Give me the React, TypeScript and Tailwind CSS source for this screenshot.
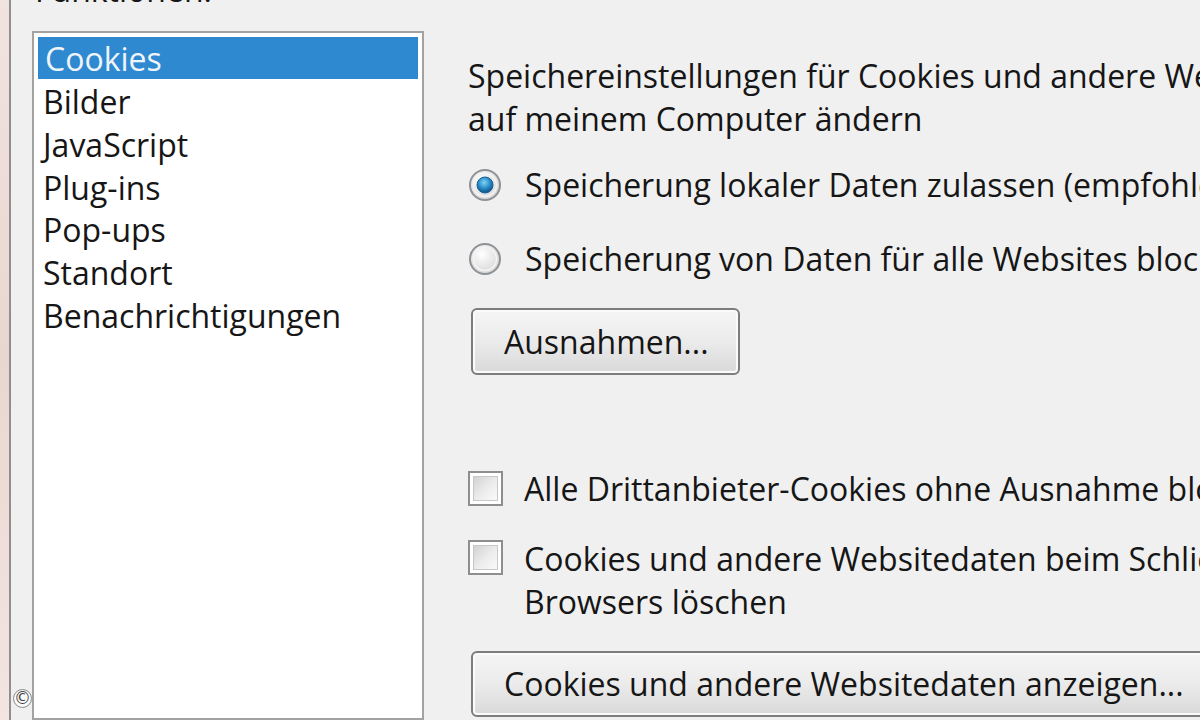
import React from "react";

function Radio({ checked }: { checked?: boolean }) {
  return (
    <svg width="34" height="34" viewBox="0 0 34 34" className="shrink-0">
      <defs>
        <radialGradient id={checked ? "rg1" : "rg0"} cx="40%" cy="35%" r="70%">
          <stop offset="0%" stopColor="#ffffff" />
          <stop offset="100%" stopColor="#d4d4d4" />
        </radialGradient>
        <radialGradient id="dot" cx="45%" cy="35%" r="65%">
          <stop offset="0%" stopColor="#7fd3f7" />
          <stop offset="55%" stopColor="#2a8dc9" />
          <stop offset="100%" stopColor="#0d4f86" />
        </radialGradient>
      </defs>
      <circle cx="17" cy="17" r="15" fill={`url(#${checked ? "rg1" : "rg0"})`} stroke="#8d9196" strokeWidth="2" />
      <circle cx="17" cy="17" r="11.5" fill="none" stroke="#f4f4f4" strokeWidth="1.5" />
      {checked && <circle cx="17" cy="17" r="8" fill="url(#dot)" stroke="#1b5f95" strokeWidth="1" />}
    </svg>
  );
}

function Checkbox() {
  return (
    <div className="w-[35px] h-[35px] shrink-0 border-2 border-[#8e8e8e] bg-white p-[3px]">
      <div className="w-full h-full bg-gradient-to-br from-[#d2d2d2] via-[#ebebeb] to-[#fafafa] border border-[#c8c8c8]" />
    </div>
  );
}

const items = ["Bilder", "JavaScript", "Plug-ins", "Pop-ups", "Standort", "Benachrichtigungen"];

export default function App() {
  return (
    <div className="relative w-[1200px] h-[720px] overflow-hidden bg-[#f0f0f0] flex font-['Open_Sans',sans-serif] text-[32px] text-[#161616]">
      {/* left edge */}
      <div className="w-[9px] h-full shrink-0 bg-gradient-to-b from-[#f1e3df] via-[#ead6d0] to-[#f3e5e1]" />
      <div className="w-[2px] h-full shrink-0 bg-[#8f8f8f]" />

      {/* list column */}
      <div className="flex flex-col shrink-0 ml-[21px] w-[392px]">
        <div className="leading-[32px] h-[32px] mt-[-26px] mb-[25px] pl-[3px] whitespace-nowrap">Funktionen:</div>
        <div className="flex-1 border-2 border-[#a2a2a2] bg-white pt-[4px] px-[4px]">
          <div className="h-[42px] leading-[44px] bg-[#2f89d0] text-[#eef4fa] pl-[7px]">Cookies</div>
          {items.map((t) => (
            <div key={t} className="h-[42.8px] leading-[45px] pl-[5px] whitespace-nowrap">
              {t}
            </div>
          ))}
        </div>
      </div>

      {/* right panel */}
      <div className="flex flex-col ml-[44px] pt-[54px] whitespace-nowrap">
        <div className="leading-[43px]">
          <div>Speichereinstellungen für Cookies und andere Websitedaten</div>
          <div>auf meinem Computer ändern</div>
        </div>

        <div className="flex items-center h-[43px] mt-[23px]">
          <div className="w-[40px] flex"><Radio checked /></div>
          <span className="ml-[17px]">Speicherung lokaler Daten zulassen (empfohlen)</span>
        </div>
        <div className="flex items-center h-[43px] mt-[31px]">
          <div className="w-[40px] flex"><Radio /></div>
          <span className="ml-[17px]">Speicherung von Daten für alle Websites blockieren</span>
        </div>

        <div className="mt-[28px] ml-[3px]">
          <button className="h-[67px] w-[269px] rounded-[6px] border-2 border-[#7d7d7d] bg-gradient-to-b from-[#f5f5f5] via-[#ebebeb] to-[#d9d9d9] text-left pl-[31px] leading-none text-[#161616] shadow-[inset_0_0_0_2px_#fbfbfb]">
            Ausnahmen...
          </button>
        </div>

        <div className="flex items-center h-[43px] mt-[92px]">
          <div className="w-[40px] flex"><Checkbox /></div>
          <span className="ml-[16px]">Alle Drittanbieter-Cookies ohne Ausnahme blockieren</span>
        </div>
        <div className="flex items-start mt-[27px]">
          <div className="w-[40px] flex pt-[3px]"><Checkbox /></div>
          <div className="ml-[16px] leading-[43px]">
            <div>Cookies und andere Websitedaten beim Schließen des</div>
            <div>Browsers löschen</div>
          </div>
        </div>

        <div className="mt-[28px] ml-[3px]">
          <button className="h-[66px] w-[760px] rounded-[6px] border-2 border-[#7d7d7d] bg-gradient-to-b from-[#f5f5f5] via-[#ebebeb] to-[#d9d9d9] text-left pl-[31px] leading-none text-[#161616] shadow-[inset_0_0_0_2px_#fbfbfb]">
            Cookies und andere Websitedaten anzeigen...
          </button>
        </div>
      </div>

      {/* copyright mark */}
      <div className="absolute left-[13px] top-[689px] w-[19px] h-[19px] rounded-full bg-[#fafafa] border border-[#8a8a8a] flex items-center justify-center text-[17px] leading-none text-[#444] font-['DejaVu_Sans',sans-serif]">
        ©
      </div>
    </div>
  );
}
